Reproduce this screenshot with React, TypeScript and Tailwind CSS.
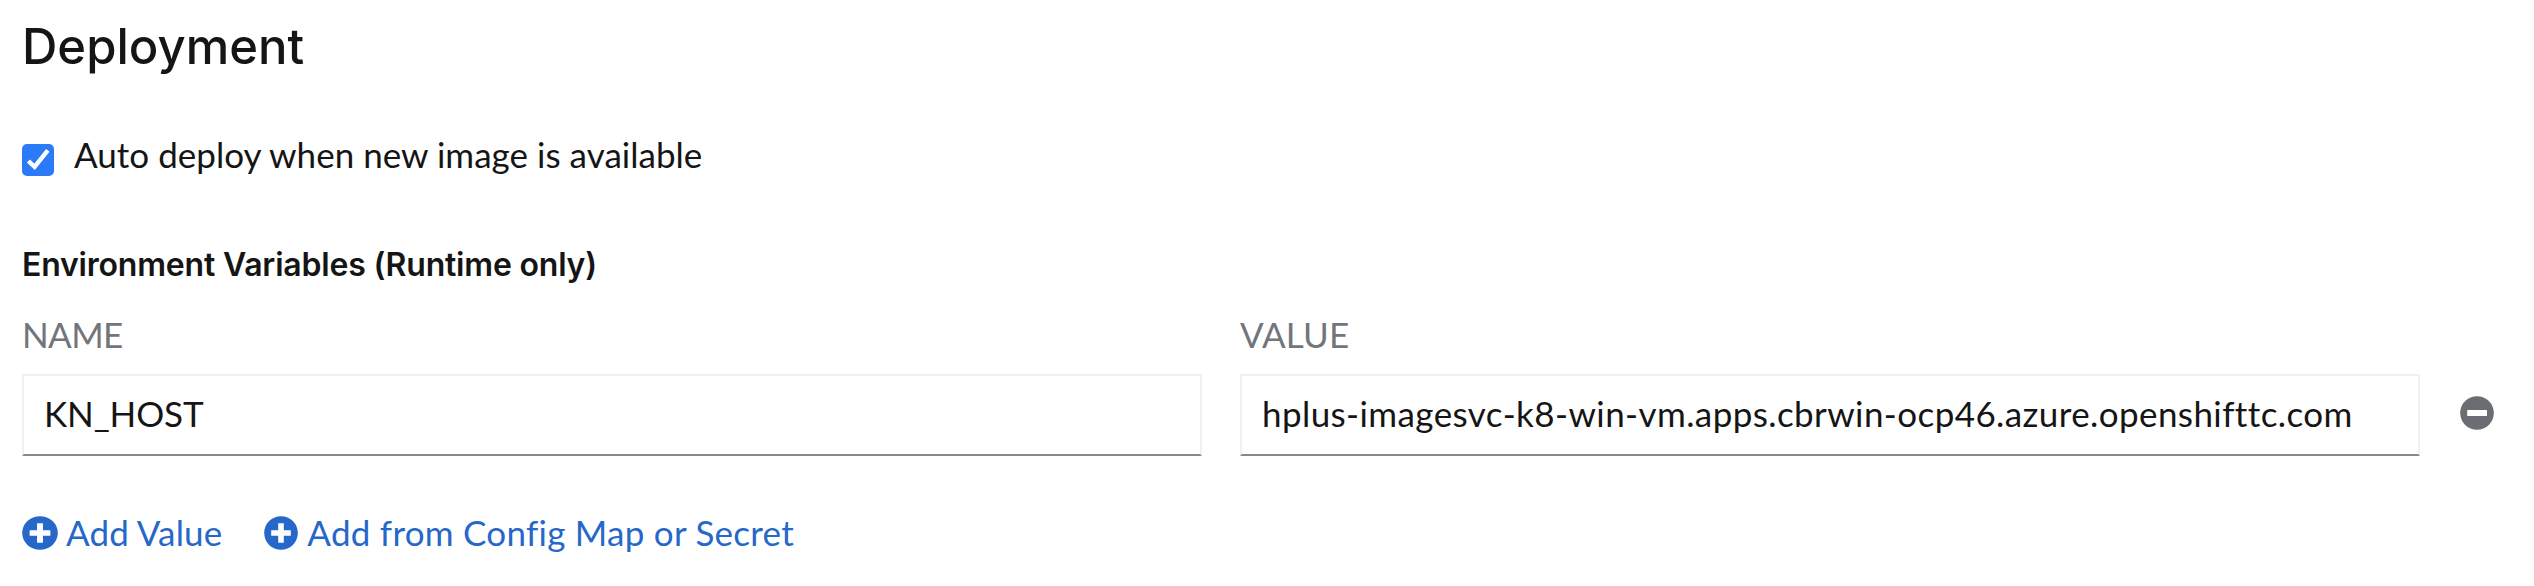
import { useState } from "react";

const labelClass = "h-[52px] font-['Lato',sans-serif] text-[35px] leading-[52px] text-[#72767b]";
const inputClass =
  "block h-[82px] w-full border-2 border-[#f0f0f0] border-b-[#8a888d] bg-white pb-[5px] pl-[20px] pr-4 font-['Lato',sans-serif] text-[35px] text-[#151515] outline-none";
const linkClass =
  "flex h-[52px] items-center whitespace-nowrap font-['Lato',sans-serif] text-[35px] leading-[52px] text-[#2668c9]";

function PlusCircle({ className }: { className: string }) {
  return (
    <svg className={className} viewBox="0 0 34 34" preserveAspectRatio="none" aria-hidden="true">
      <circle cx="17" cy="17" r="16.8" fill="#2668c9" />
      <path d="M14.2 7.2h5.6v7h7v5.6h-7v7h-5.6v-7h-7v-5.6h7z" fill="#fff" />
    </svg>
  );
}

function MinusCircle() {
  return (
    <svg className="h-[34px] w-[34px]" viewBox="0 0 34 34" aria-hidden="true">
      <circle cx="17" cy="17" r="16.8" fill="#6a6e73" />
      <rect x="7.2" y="14" width="19.8" height="6" rx="0.5" fill="#fff" />
    </svg>
  );
}

export default function App() {
  const [autoDeploy, setAutoDeploy] = useState(true);
  const [name, setName] = useState("KN_HOST");
  const [value, setValue] = useState("hplus-imagesvc-k8-win-vm.apps.cbrwin-ocp46.azure.openshifttc.com");

  return (
    <main className="min-h-[586px] bg-white pl-[22px] pt-[17px] text-[#151515]">
      <h2 className="h-[60px] font-['Inter',sans-serif] text-[49px] font-medium leading-[60px]">Deployment</h2>

      <label className="mt-[51px] flex h-[52px] items-start">
        <span className="mt-4 grid h-8 w-8 shrink-0 place-items-center rounded-[5px] bg-[#2b7af7]">
          <input
            type="checkbox"
            className="sr-only"
            checked={autoDeploy}
            onChange={(e) => setAutoDeploy(e.target.checked)}
          />
          {autoDeploy && (
            <svg className="h-8 w-8" viewBox="0 0 32 32" fill="none" aria-hidden="true">
              <path d="M6.4 17 12.6 22.8 25.8 6.4" stroke="#fff" strokeWidth="4.4" />
            </svg>
          )}
        </span>
        <span className="ml-5 whitespace-nowrap font-['Lato',sans-serif] text-[35px] leading-[53px] tracking-[0.03px]">
          Auto deploy when new image is available
        </span>
      </label>

      <h3 className="mt-[61px] h-12 font-['Inter',sans-serif] text-[32px] font-semibold leading-[48px] tracking-[-0.2px]">
        Environment Variables (Runtime only)
      </h3>

      <div className="mt-[19px] flex">
        <div className="w-[1180px]">
          <div className={`${labelClass} tracking-[-0.6px]`}>NAME</div>
          <input
            aria-label="Name"
            className={`${inputClass} mt-[14px] tracking-[-0.12px]`}
            value={name}
            onChange={(e) => setName(e.target.value)}
          />
        </div>
        <div className="ml-[38px] w-[1180px]">
          <div className={`${labelClass} tracking-[0.17px]`}>VALUE</div>
          <input
            aria-label="Value"
            className={`${inputClass} mt-[14px] tracking-[0.41px]`}
            value={value}
            onChange={(e) => setValue(e.target.value)}
          />
        </div>
        <button type="button" aria-label="Remove" className="ml-10 mt-[88px] h-[34px] w-[34px]">
          <MinusCircle />
        </button>
      </div>

      <div className="mt-[50px] flex">
        <button type="button" className={`${linkClass} tracking-[0.15px]`}>
          <PlusCircle className="mt-[2px] h-[34px] w-9" />
          <span className="ml-2">Add Value</span>
        </button>
        <button type="button" className={`${linkClass} ml-[42px] tracking-[0.26px]`}>
          <PlusCircle className="mt-[2px] h-[34px] w-[34px]" />
          <span className="ml-[9px]">Add from Config Map or Secret</span>
        </button>
      </div>
    </main>
  );
}
